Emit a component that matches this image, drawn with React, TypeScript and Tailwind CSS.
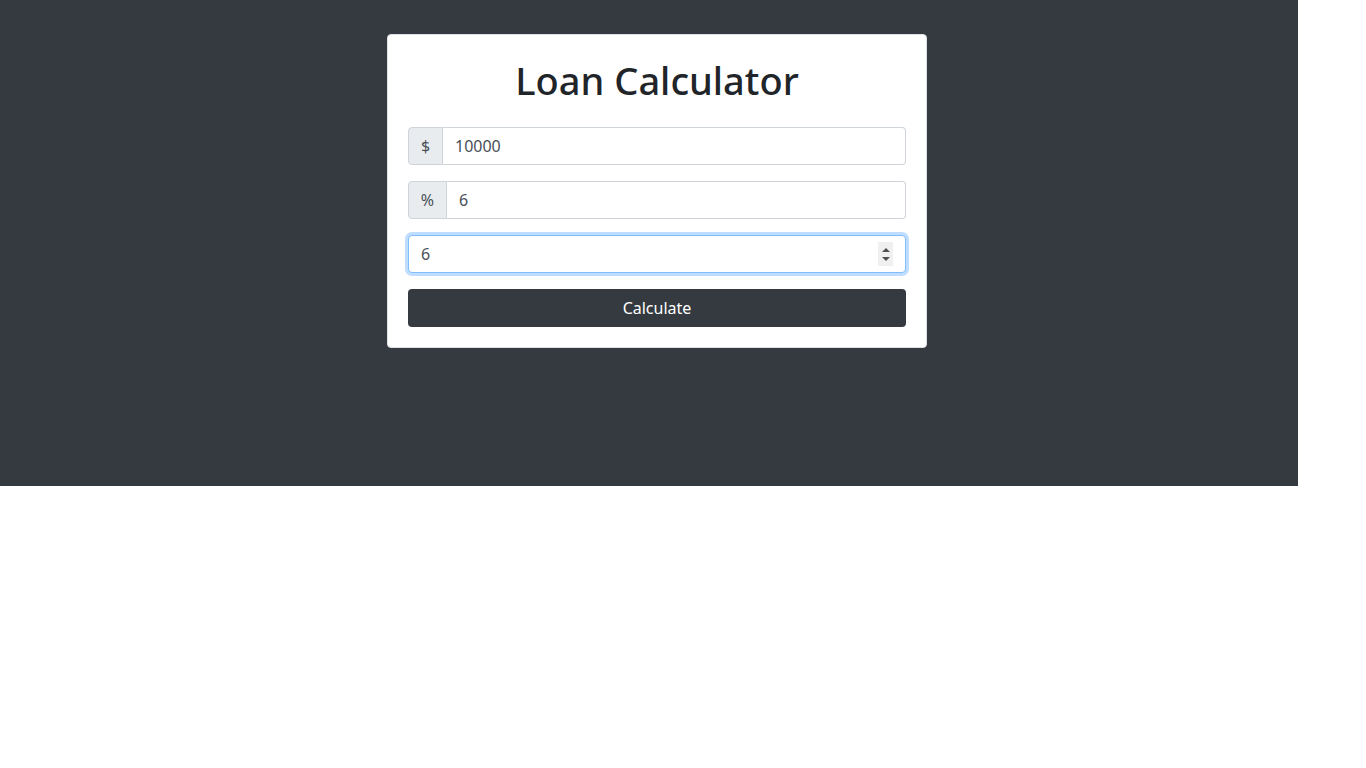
const font = { fontFamily: '"Noto Sans", "Open Sans", Arial, sans-serif' };

function PrependInput({ sign, value, signWidth }: { sign: string; value: string; signWidth: string }) {
  return (
    <div className="flex h-[38px] w-full">
      <span
        className={`flex ${signWidth} items-center justify-center rounded-l border border-[#ced4da] bg-[#e9ecef] text-base text-[#495057]`}
      >
        {sign}
      </span>
      <input
        readOnly
        value={value}
        className="min-w-0 flex-1 rounded-r border border-l-0 border-[#ced4da] bg-white px-3 text-base text-[#495057] outline-none"
      />
    </div>
  );
}

export default function App() {
  return (
    <div style={font} className="h-[486px] w-[1298px] bg-[#343a40] pt-[34px]">
      <div className="ml-[387px] w-[540px] rounded border border-[#dee2e6] bg-white p-5">
        <h1 className="mb-6 pt-[2px] text-center text-[38px] font-medium leading-[46px] text-[#212529]">
          Loan Calculator
        </h1>
        <div className="flex flex-col gap-4">
          <PrependInput sign="$" value="10000" signWidth="w-[35px]" />
          <PrependInput sign="%" value="6" signWidth="w-[39px]" />
          <div className="relative h-[38px] w-full">
            <input
              readOnly
              value="6"
              className="h-full w-full rounded border border-[#80bdff] bg-white px-3 text-base text-[#495057] shadow-[0_0_0_3px_rgba(0,123,255,0.25)] outline-none"
            />
            <div className="absolute right-[13px] top-[7px] flex h-[24px] w-[15px] flex-col items-center justify-center gap-[5px] bg-[#f0f0f0]">
              <svg width="8" height="4" viewBox="0 0 8 4">
                <path d="M0 4 L4 0 L8 4 Z" fill="#505050" />
              </svg>
              <svg width="8" height="4" viewBox="0 0 8 4">
                <path d="M0 0 L4 4 L8 0 Z" fill="#505050" />
              </svg>
            </div>
          </div>
          <button className="h-[38px] w-full rounded bg-[#343a40] text-base text-white">Calculate</button>
        </div>
      </div>
    </div>
  );
}
